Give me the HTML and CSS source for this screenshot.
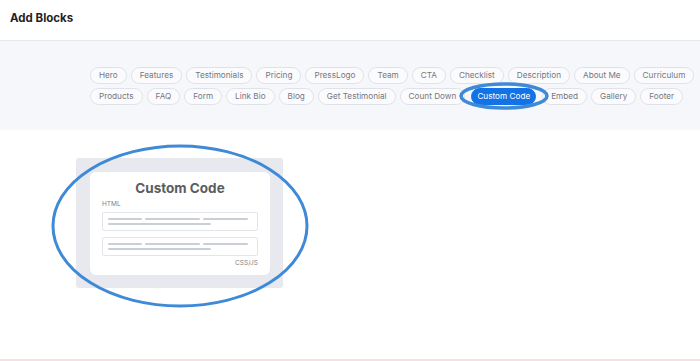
FILE: index.html
```html
<!DOCTYPE html>
<html>
<head>
<meta charset="utf-8">
<link rel="stylesheet" href="styles.css">
</head>
<body>
<div class="page">
  <header class="header">Add Blocks</header>
  <section class="band">
    <div class="row">
      <span class="chip">Hero</span>
      <span class="chip">Features</span>
      <span class="chip">Testimonials</span>
      <span class="chip">Pricing</span>
      <span class="chip">PressLogo</span>
      <span class="chip">Team</span>
      <span class="chip">CTA</span>
      <span class="chip">Checklist</span>
      <span class="chip">Description</span>
      <span class="chip">About Me</span>
      <span class="chip">Curriculum</span>
    </div>
    <div class="row">
      <span class="chip">Products</span>
      <span class="chip">FAQ</span>
      <span class="chip">Form</span>
      <span class="chip">Link Bio</span>
      <span class="chip">Blog</span>
      <span class="chip">Get Testimonial</span>
      <span class="chip">Count Down</span>
      <span class="chip active">Custom Code</span>
      <span class="chip">Embed</span>
      <span class="chip">Gallery</span>
      <span class="chip">Footer</span>
    </div>
  </section>
  <section class="preview">
    <div class="frame">
      <div class="card">
        <div class="title">Custom Code</div>
        <div class="label">HTML</div>
        <div class="box">
          <div class="lines"><i class="l1"></i><i class="l2"></i><i class="l3"></i></div>
          <div class="lines"><i class="l4"></i></div>
        </div>
        <div class="box second">
          <div class="lines"><i class="l1"></i><i class="l2"></i><i class="l3"></i></div>
          <div class="lines"><i class="l4"></i></div>
        </div>
        <div class="label right">CSS/JS</div>
      </div>
    </div>
  </section>
  <svg class="marks" width="700" height="361" viewBox="0 0 700 361">
    <ellipse cx="504" cy="96" rx="43" ry="12" fill="none" stroke="#3f8ad6" stroke-width="3.5"/>
    <ellipse cx="180" cy="226" rx="127" ry="80" fill="none" stroke="#3f8ad6" stroke-width="3"/>
  </svg>
</div>
</body>
</html>
```
FILE: styles.css
```css
* { box-sizing: border-box; }
html, body { margin: 0; padding: 0; background: #fff; }
body { font-family: Inter, "Noto Sans", "Liberation Sans", sans-serif; }
.page {
  position: relative;
  width: 700px;
  height: 361px;
  overflow: hidden;
  border-bottom: 2px solid #f5e0e6;
}
.header {
  height: 41px;
  border-bottom: 1px solid #e7e9ef;
  padding: 11px 0 0 10px;
  font-size: 11.5px;
  font-weight: 700;
  color: #1f1f24;
  line-height: 14px;
}
.band {
  height: 89px;
  background: #f6f7fb;
  padding: 26px 0 0 90px;
  display: flex;
  flex-direction: column;
  gap: 4px;
}
.row {
  display: flex;
  gap: 4px;
}
.chip {
  height: 17px;
  padding: 0 8px;
  border: 1px solid #dfe2e8;
  border-radius: 9px;
  background: #fbfbfd;
  color: #74777e;
  font-size: 8.2px;
  line-height: 15px;
  white-space: nowrap;
}
.chip.active {
  background: #1372e6;
  border-color: #1372e6;
  color: #fff;
  padding: 0 5px;
  margin: 0 2px 0 2px;
}
.preview {
  padding: 28px 0 0 76px;
}
.frame {
  width: 207px;
  height: 130px;
  background: #e8e9ee;
  border-radius: 3px;
  padding: 14px 13px 13px 14px;
}
.card {
  background: #fff;
  border-radius: 6px;
  height: 103px;
  padding: 8px 12px 0;
  display: flex;
  flex-direction: column;
}
.title {
  text-align: center;
  font-size: 13.5px;
  font-weight: 700;
  color: #5b5c60;
  line-height: 16px;
}
.label {
  margin-top: 4px;
  font-size: 6.5px;
  color: #7d7f85;
  line-height: 8px;
}
.label.right {
  margin-top: 3px;
  text-align: right;
}
.box {
  margin-top: 4px;
  height: 19px;
  border: 1px solid #e3e5ea;
  border-radius: 2px;
  padding: 5px 0 0 5px;
  display: flex;
  flex-direction: column;
  gap: 3px;
}
.box.second { margin-top: 6px; }
.lines { display: flex; gap: 3px; height: 2px; }
.lines i { display: block; height: 2px; background: #c9ced8; border-radius: 1px; }
.l1 { width: 34px; }
.l2 { width: 55px; }
.l3 { width: 45px; }
.l4 { width: 103px; }
.marks {
  position: absolute;
  top: 0;
  left: 0;
  pointer-events: none;
}
```
